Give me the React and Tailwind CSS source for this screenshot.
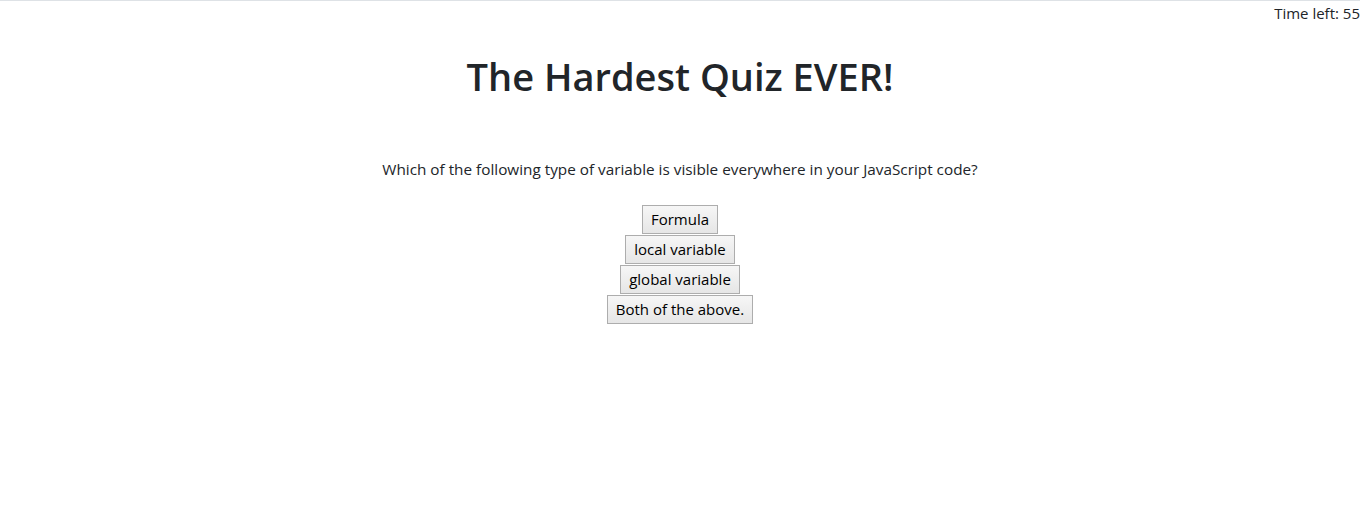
const answers = ['Formula', 'local variable', 'global variable', 'Both of the above.'];

const App = () => {
  return (
    <div className="min-h-[510px] bg-white border-t border-[#dee2e6] text-[#212529] font-['Open_Sans',sans-serif]">
      <div className="text-right text-[15px] leading-6">Time left: 55</div>

      <h1 className="mt-[27px] text-center text-[38px] font-semibold leading-[48px]">The Hardest Quiz EVER!</h1>

      <p className="mt-[57px] text-center text-[15.3px] leading-6">
        Which of the following type of variable is visible everywhere in your JavaScript code?
      </p>

      <div className="mt-[24px] flex flex-col items-center gap-px">
        {answers.map((a) => (
          <button
            key={a}
            className="h-[29px] px-[8px] text-[15px] text-black border border-[#adadad] bg-gradient-to-b from-[#f6f6f6] to-[#e6e6e6] hover:bg-[#e5f1fb]"
          >
            {a}
          </button>
        ))}
      </div>
    </div>
  );
};

export default App;
